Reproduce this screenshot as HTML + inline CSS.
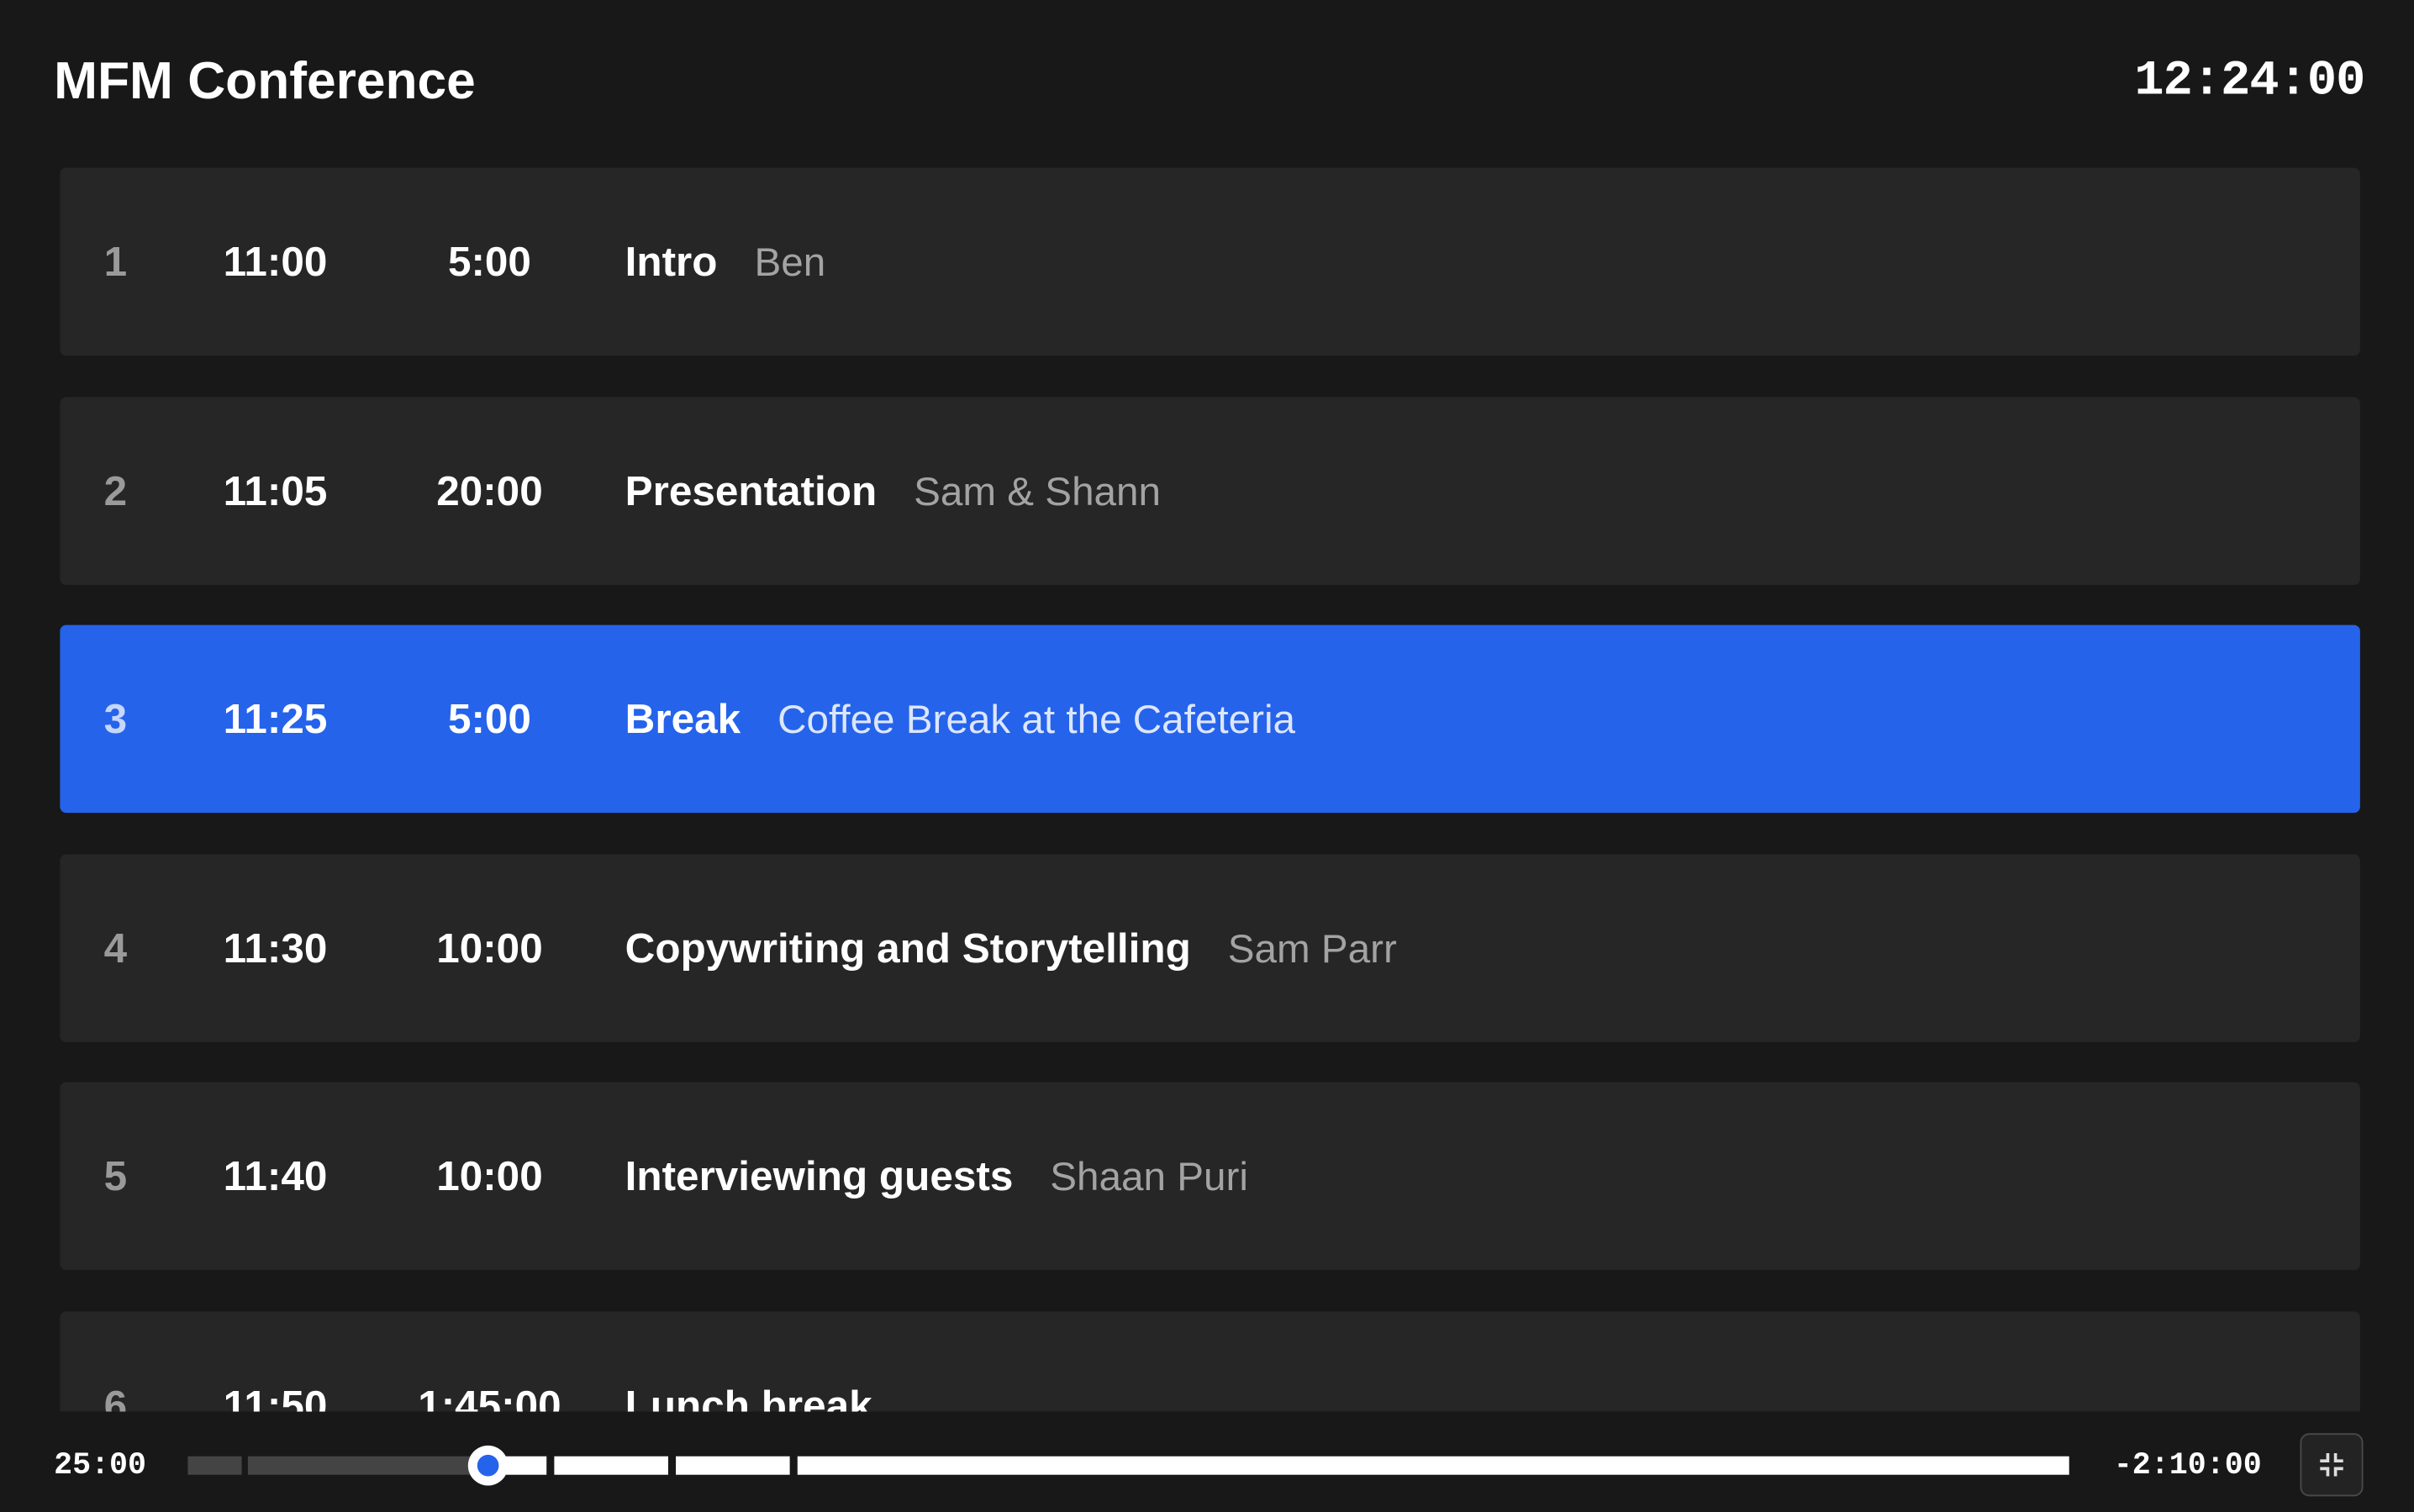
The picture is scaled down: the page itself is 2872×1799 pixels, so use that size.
<!DOCTYPE html>
<html><head><meta charset="utf-8"><style>
html,body{margin:0;padding:0;background:#181818;overflow:hidden;width:2872px;height:1798px}
#w{position:absolute;left:0;top:0;width:1568px;height:982px;transform:scale(1.83163);transform-origin:0 0;font-family:"Liberation Sans",sans-serif;color:#fff}
.title{position:absolute;left:35px;top:34px;font-size:34px;font-weight:bold;letter-spacing:0px}
.clock{position:absolute;right:32px;top:34px;font-family:"Liberation Mono",monospace;font-weight:bold;font-size:32px;letter-spacing:-0.5px}
.list{position:absolute;left:0;top:0;width:1568px;height:917px;overflow:hidden}
.row{position:absolute;left:39px;width:1494px;height:122px;background:#262626;border-radius:4px;font-size:27px;font-weight:bold}
.row span{position:absolute;top:46px;white-space:nowrap}
.n{left:28px;width:16px;text-align:center;color:#9a9a9a}
.s{left:106px}
.d{left:229px;width:100px;text-align:center}
.t{left:367px}
.sub{font-weight:normal;color:#a3a3a3;margin-left:24px;font-size:26px}
.act{background:#2563eb}
.act .n{color:#c7d6fb}
.act .sub{color:#dce6fd}
.bot{position:absolute;left:0;top:917px;width:1568px;height:65px;background:#181818}
.mono{position:absolute;font-family:"Liberation Mono",monospace;font-size:20px;font-weight:bold;top:24px}
.seg{position:absolute;top:29px;height:12px}
</style></head><body><div id="w">
<div class="title">MFM Conference</div>
<div class="clock">12:24:00</div>
<div class="list">
<div class="row" style="top:109px"><span class="n">1</span><span class="s">11:00</span><span class="d">5:00</span><span class="t">Intro<span class="sub" style="position:static">Ben</span></span></div>
<div class="row" style="top:258px"><span class="n">2</span><span class="s">11:05</span><span class="d">20:00</span><span class="t">Presentation<span class="sub" style="position:static">Sam &amp; Shann</span></span></div>
<div class="row act" style="top:406px"><span class="n">3</span><span class="s">11:25</span><span class="d">5:00</span><span class="t">Break<span class="sub" style="position:static">Coffee Break at the Cafeteria</span></span></div>
<div class="row" style="top:555px"><span class="n">4</span><span class="s">11:30</span><span class="d">10:00</span><span class="t">Copywriting and Storytelling<span class="sub" style="position:static">Sam Parr</span></span></div>
<div class="row" style="top:703px"><span class="n">5</span><span class="s">11:40</span><span class="d">10:00</span><span class="t">Interviewing guests<span class="sub" style="position:static">Shaan Puri</span></span></div>
<div class="row" style="top:852px"><span class="n">6</span><span class="s">11:50</span><span class="d">1:45:00</span><span class="t">Lunch break</span></div>
</div>
<div class="bot">
<div class="mono" style="left:35px">25:00</div>
<div class="seg" style="left:122px;width:35px;background:#444"></div>
<div class="seg" style="left:161px;width:156px;background:#444"></div>
<div class="seg" style="left:317px;width:38px;background:#fff"></div>
<div class="seg" style="left:360px;width:74px;background:#fff"></div>
<div class="seg" style="left:439px;width:74px;background:#fff"></div>
<div class="seg" style="left:518px;width:826px;background:#fff"></div>
<div style="position:absolute;left:304px;top:22px;width:26px;height:26px;border-radius:50%;background:#fff"></div>
<div style="position:absolute;left:310px;top:28px;width:14px;height:14px;border-radius:50%;background:#2563eb"></div>
<div class="mono" style="left:1373px">-2:10:00</div>
<div style="position:absolute;left:1494px;top:14px;width:41px;height:41px;box-sizing:border-box;border:1px solid #4a4a4a;border-radius:6px;background:#232323">
<svg width="41" height="41" viewBox="0 0 41 41" style="position:absolute;left:-1px;top:-1px"><path d="M18 13v5h-5M23 13v5h5M18 28v-5h-5M23 28v-5h5" stroke="#ddd" stroke-width="2" fill="none"/></svg>
</div>
</div>
</div></body></html>
